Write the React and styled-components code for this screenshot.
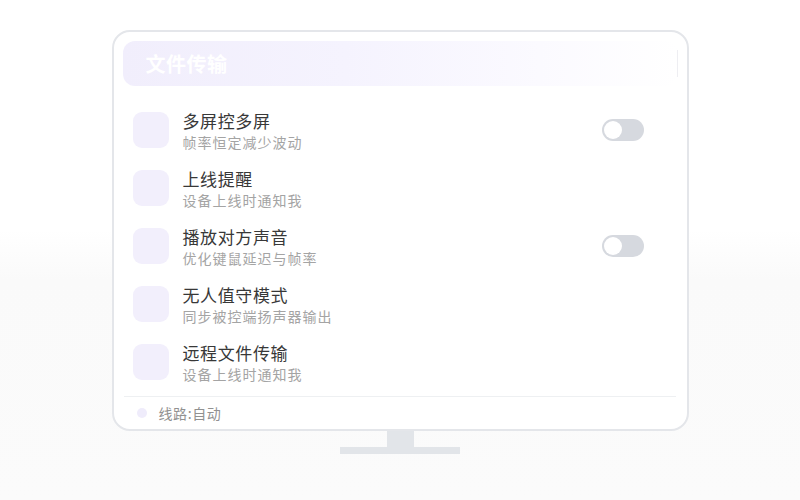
import styled, { createGlobalStyle } from "styled-components";

const GlobalStyle = createGlobalStyle`
  html, body {
    margin: 0;
    padding: 0;
  }
  body {
    font-family: "Noto Sans CJK SC", "Noto Sans", sans-serif;
    background: #ffffff;
  }
`;

const Page = styled.div`
  width: 800px;
  height: 500px;
  box-sizing: border-box;
  padding-top: 30px;
  display: flex;
  flex-direction: column;
  align-items: center;
  background: linear-gradient(180deg, #ffffff 0%, #ffffff 46%, #fafafa 56%, #fbfbfb 100%);
`;

const Screen = styled.div`
  width: 577px;
  height: 401px;
  box-sizing: border-box;
  border: 2px solid #e4e6ea;
  border-radius: 18px;
  background: #ffffff;
  padding: 9px 9px 0;
  display: flex;
  flex-direction: column;
`;

const Header = styled.div`
  height: 45px;
  border-radius: 12px;
  background: linear-gradient(90deg, #f1eefc 0%, #f5f3fe 40%, #fbfaff 75%, #ffffff 100%);
  display: flex;
  align-items: center;
  padding-left: 23px;
  position: relative;
  &::after {
    content: "";
    position: absolute;
    right: 0;
    top: 9px;
    width: 1px;
    height: 27px;
    background: #eeeef2;
  }
`;

const Title = styled.h1`
  margin: 0;
  font-size: 20px;
  font-weight: 700;
  color: #ffffff;
  letter-spacing: 0.5px;
`;

const List = styled.div`
  display: flex;
  flex-direction: column;
  gap: 22px;
  padding: 26px 34px 0 10px;
`;

const Row = styled.div`
  height: 36px;
  display: flex;
  align-items: center;
`;

const IconBox = styled.div`
  width: 36px;
  height: 36px;
  border-radius: 9px;
  background: #f2effc;
  flex-shrink: 0;
`;

const Texts = styled.div`
  margin-left: 14px;
  flex: 1;
  display: flex;
  flex-direction: column;
  padding-top: 1px;
`;

const RowTitle = styled.div`
  font-size: 17px;
  line-height: 20px;
  color: #383838;
  letter-spacing: 0.6px;
`;

const RowSub = styled.div`
  margin-top: 2px;
  font-size: 14px;
  line-height: 18px;
  color: #a4a4a4;
  letter-spacing: 1px;
`;

const Toggle = styled.div`
  width: 42px;
  height: 22px;
  border-radius: 11px;
  background: #d6d9df;
  position: relative;
  flex-shrink: 0;
  &::after {
    content: "";
    position: absolute;
    left: 2px;
    top: 2px;
    width: 18px;
    height: 18px;
    border-radius: 50%;
    background: #ffffff;
  }
`;

const Divider = styled.div`
  margin: 16px 2px 0 1px;
  height: 1px;
  background: #eef0f2;
`;

const Footer = styled.div`
  height: 32px;
  display: flex;
  align-items: center;
  padding-left: 14px;
  gap: 12px;
`;

const Dot = styled.span`
  width: 10px;
  height: 10px;
  border-radius: 50%;
  background: #efecfb;
`;

const FooterText = styled.span`
  font-size: 14px;
  letter-spacing: 0.6px;
  color: #919191;
`;

const Neck = styled.div`
  width: 27px;
  height: 16px;
  background: #e2e5e9;
`;

const Base = styled.div`
  width: 120px;
  height: 7px;
  background: #e2e5e9;
`;

const items = [
  { title: "多屏控多屏", sub: "帧率恒定减少波动", toggle: true },
  { title: "上线提醒", sub: "设备上线时通知我" },
  { title: "播放对方声音", sub: "优化键鼠延迟与帧率", toggle: true },
  { title: "无人值守模式", sub: "同步被控端扬声器输出" },
  { title: "远程文件传输", sub: "设备上线时通知我" },
];

const App = () => {
  return (
    <Page>
      <GlobalStyle />
      <Screen>
        <Header>
          <Title>文件传输</Title>
        </Header>
        <List>
          {items.map((item) => (
            <Row key={item.title}>
              <IconBox />
              <Texts>
                <RowTitle>{item.title}</RowTitle>
                <RowSub>{item.sub}</RowSub>
              </Texts>
              {item.toggle && <Toggle />}
            </Row>
          ))}
        </List>
        <Divider />
        <Footer>
          <Dot />
          <FooterText>线路:自动</FooterText>
        </Footer>
      </Screen>
      <Neck />
      <Base />
    </Page>
  );
};

export default App;
